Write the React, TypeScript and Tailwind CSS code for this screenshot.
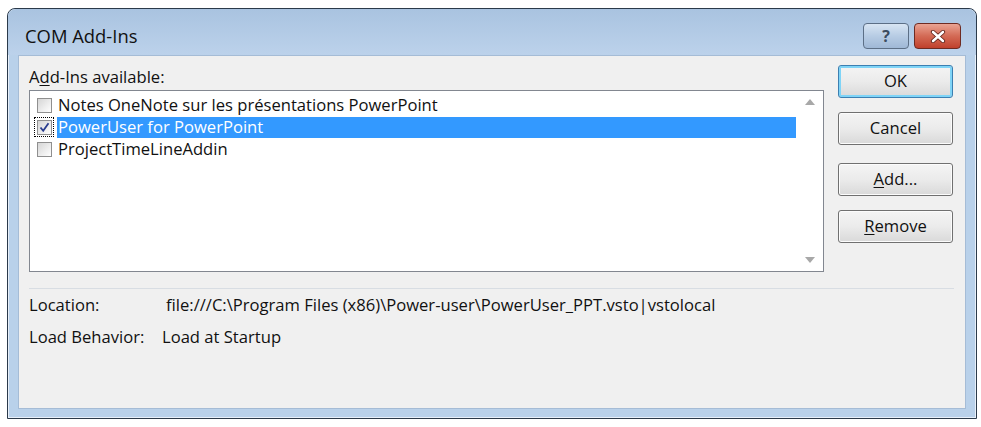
import React from 'react'

const font = { fontFamily: '"Open Sans", "Noto Sans", "Liberation Sans", sans-serif' }

function Check({ checked = false, focused = false }: { checked?: boolean; focused?: boolean }) {
  return (
    <span className={`flex h-[20px] w-[20px] shrink-0 items-center justify-center ${focused ? 'border border-dotted border-black' : ''}`}>
      <span className="flex h-[15px] w-[15px] items-center justify-center border border-[#8f8f8f] bg-gradient-to-br from-[#d6d6d6] to-[#ffffff]">
        {checked ? (
          <svg width="11" height="11" viewBox="0 0 11 11">
            <path d="M1.5 5.5 L4.2 8.8 L9.5 1.2" fill="none" stroke="#2a3d8f" strokeWidth="1.8" />
          </svg>
        ) : null}
      </span>
    </span>
  )
}

function Row({ label, checked, selected }: { label: string; checked?: boolean; selected?: boolean }) {
  return (
    <div className="flex h-[22px] items-center gap-[3px] pl-[4px]">
      <Check checked={checked} focused={selected} />
      <span className={`flex h-[21px] grow items-center pl-[1px] text-[16.6px] ${selected ? 'bg-[#3399ff] text-white' : 'text-[#111]'}`}>{label}</span>
    </div>
  )
}

function Button({ children, primary = false }: { children: React.ReactNode; primary?: boolean }) {
  return (
    <button
      className={`flex h-[33px] w-[115px] items-center justify-center rounded-[3px] border bg-gradient-to-b from-[#f4f4f4] via-[#ebebeb] to-[#d9d9d9] text-[16.6px] text-[#111] ${
        primary ? 'border-[#3c7fb1] shadow-[inset_0_0_0_2px_#7fd4f7]' : 'border-[#707070] shadow-[inset_0_0_0_1px_#fcfcfc]'
      }`}
    >
      {children}
    </button>
  )
}

export default function App() {
  return (
    <div className="h-[427px] w-[981px] bg-white pl-[7px] pt-[8px]" style={font}>
      <div className="flex h-[411px] w-[970px] flex-col rounded-t-[8px] border border-[#2b3a4a] bg-[#b9d1ea] shadow-[inset_0_0_0_1px_#e8f0fa]">
        {/* title bar */}
        <div className="flex h-[46px] items-start rounded-t-[8px] bg-gradient-to-b from-[#a9c3e0] to-[#bcd2eb]">
          <div className="pl-[17px] pt-[13px] text-[18.4px] text-[#111]">COM Add-Ins</div>
          <div className="ml-auto mr-[15px] mt-[14px] flex gap-[5px]">
            <div className="flex h-[26px] w-[46px] items-center justify-center rounded-[4px] border border-[#5c6f86] bg-gradient-to-b from-[#d8e5f3] via-[#b7cce4] to-[#9fb8d6] text-[16px] font-bold text-[#3c4c60]">
              ?
            </div>
            <div className="flex h-[26px] w-[47px] items-center justify-center rounded-[4px] border border-[#6e2b22] bg-gradient-to-b from-[#e9a393] via-[#d36a55] to-[#c0402c]">
              <svg width="16" height="13" viewBox="0 0 16 13">
                <path d="M3 2 L13 11 M13 2 L3 11" stroke="#5a1c14" strokeWidth="4.2" strokeLinecap="round" />
                <path d="M3 2 L13 11 M13 2 L3 11" stroke="#ffffff" strokeWidth="2.6" strokeLinecap="round" />
              </svg>
            </div>
          </div>
        </div>

        {/* client area */}
        <div className="mx-[10px] mb-[9px] flex grow flex-col border border-[#a5bcd6] bg-[#f0f0f0] px-[10px] text-[16.6px] text-[#111]">
          <div className="flex">
            <div className="flex w-[795px] flex-col">
              <div className="pt-[10px] leading-[22px]">
                A<span className="underline underline-offset-2">d</span>d-Ins available:
              </div>
              <div className="mt-[2px] flex h-[182px] border border-[#828790] bg-white">
                <div className="grow pt-[3px]">
                  <Row label="Notes OneNote sur les présentations PowerPoint" />
                  <Row label="PowerUser for PowerPoint" checked selected />
                  <Row label="ProjectTimeLineAddin" />
                </div>
                <div className="flex w-[27px] flex-col items-center justify-between py-[8px]">
                  <svg width="10" height="6" viewBox="0 0 10 6">
                    <path d="M0 6 L5 0 L10 6 Z" fill="#a8a8a8" />
                  </svg>
                  <svg width="10" height="6" viewBox="0 0 10 6">
                    <path d="M0 0 L5 6 L10 0 Z" fill="#a8a8a8" />
                  </svg>
                </div>
              </div>
            </div>
            <div className="ml-auto flex flex-col gap-[14px] pr-[2px] pt-[9px]">
              <Button primary>OK</Button>
              <Button>Cancel</Button>
              <div className="mt-[4px] flex flex-col gap-[14px]">
                <Button>
                  <span className="underline underline-offset-2">A</span>dd...
                </Button>
                <Button>
                  <span className="underline underline-offset-2">R</span>emove
                </Button>
              </div>
            </div>
          </div>

          <div className="mt-[16px] mr-[1px] h-px bg-[#d8dde3]" />

          <div className="mt-[5px] flex leading-[22px]">
            <span className="w-[137px]">Location:</span>
            <span>file:///C:\Program Files (x86)\Power-user\PowerUser_PPT.vsto|vstolocal</span>
          </div>
          <div className="mt-[10px] flex leading-[22px]">
            <span className="w-[133px]">Load Behavior:</span>
            <span>Load at Startup</span>
          </div>
        </div>
      </div>
    </div>
  )
}
